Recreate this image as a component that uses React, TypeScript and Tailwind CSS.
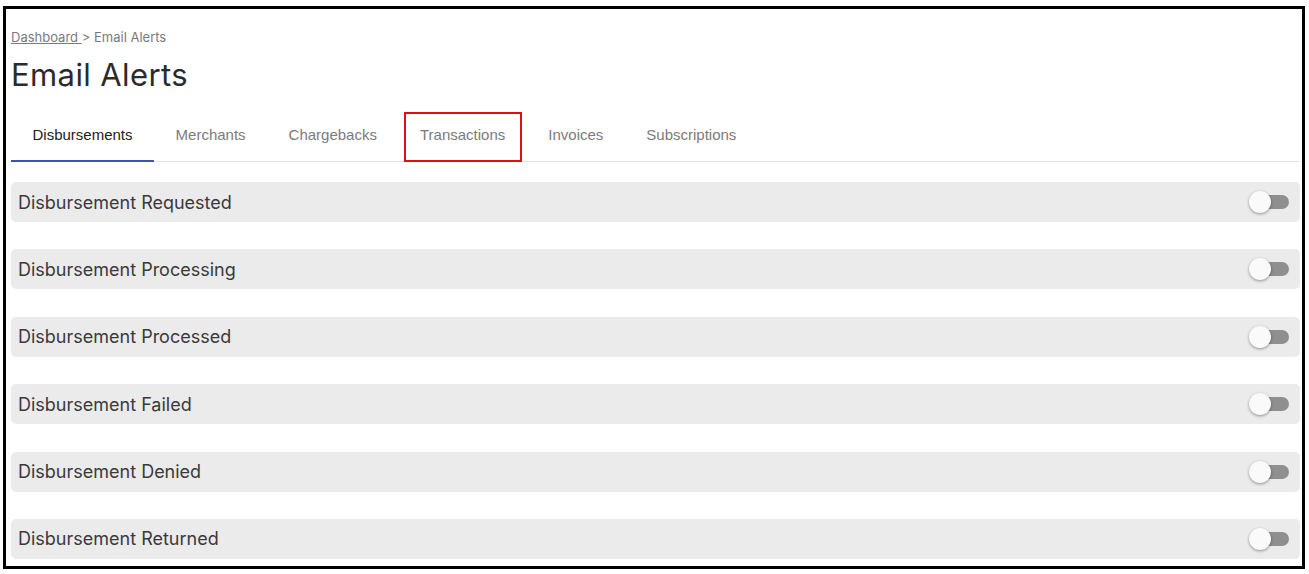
const tabs = [
  "Disbursements",
  "Merchants",
  "Chargebacks",
  "Transactions",
  "Invoices",
  "Subscriptions",
];

const alerts = [
  "Disbursement Requested",
  "Disbursement Processing",
  "Disbursement Processed",
  "Disbursement Failed",
  "Disbursement Denied",
  "Disbursement Returned",
];

function Toggle() {
  return (
    <div className="relative w-[40px] h-[22px] flex items-center">
      <div className="absolute left-[3px] right-0 h-[14px] rounded-full bg-[#8f8f8f]" />
      <div className="absolute left-0 w-[22px] h-[22px] rounded-full bg-[#fafafa] shadow-[0_1px_3px_rgba(0,0,0,0.4)]" />
    </div>
  );
}

function App() {
  return (
    <div className="h-[574px] bg-white pl-[3px] pt-[6px] pr-[4px] pb-[5px]">
      <div className="h-full border-[3px] border-black pl-[5px] pr-[2px] font-['Inter',sans-serif]">
        <div className="pt-[18px] text-[13px] leading-[20px] text-[#7a7a7a]">
          <span className="underline">Dashboard </span> &gt; Email Alerts
        </div>
        <h1 className="mt-[9px] text-[31px] leading-[38px] text-[#2b2b2b] tracking-[0.4px]">
          Email Alerts
        </h1>

        <div className="mt-[18px] flex border-b border-[#e2e2e2] font-['Liberation_Sans',Arial,sans-serif] text-[15px]">
          {tabs.map((tab, i) => (
            <div
              key={tab}
              className={`relative h-[49px] px-[21.5px] pb-[2px] flex items-center ${
                i === 0 ? "text-[#222]" : "text-[#7b7b7b]"
              }`}
            >
              {tab}
              {i === 0 && (
                <div className="absolute left-0 right-0 -bottom-px h-[2px] bg-[#3f51b5]" />
              )}
              {tab === "Transactions" && (
                <div className="absolute left-[6px] right-[5px] top-0 -bottom-px border-[2.5px] border-[#e01010]" />
              )}
            </div>
          ))}
        </div>

        <div className="mt-[20px] flex flex-col gap-[27.4px]">
          {alerts.map((name) => (
            <div
              key={name}
              className="h-[40px] rounded-[5px] bg-[#ebebeb] pl-[7px] pr-[11px] flex items-center justify-between"
            >
              <span className="text-[18px] text-[#3a3a3a]">{name}</span>
              <Toggle />
            </div>
          ))}
        </div>
      </div>
    </div>
  );
}

export default App;
